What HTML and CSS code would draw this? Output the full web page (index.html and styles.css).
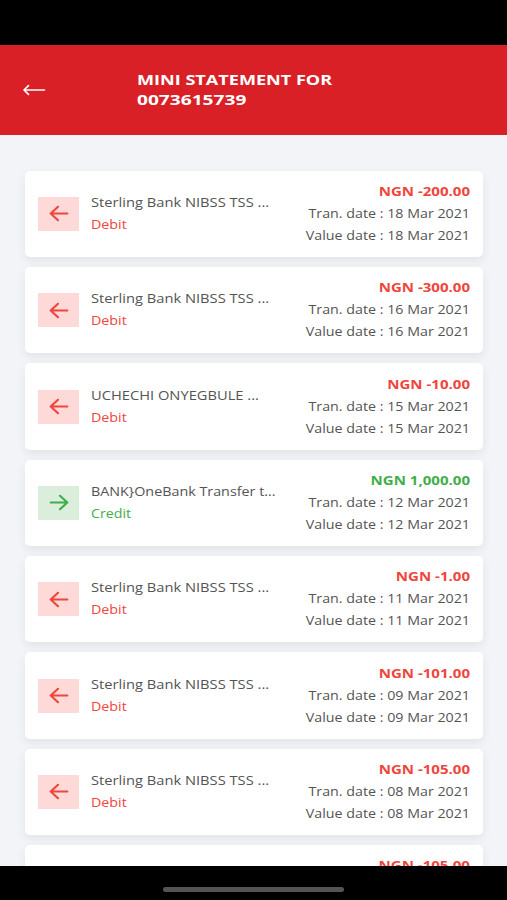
FILE: index.html
```html
<!DOCTYPE html>
<html lang="en">
<head>
    <meta charset="UTF-8">
    <meta name="viewport" content="width=device-width, initial-scale=1.0">
    <title>Mini Statement</title>
    <link rel="stylesheet" href="styles.css">
</head>
<body>

    <div class="status-bar"></div>

    <header class="header">
        <svg class="back" viewBox="0 0 24 12" width="24" height="12">
            <path d="M22.5 6H2.5M6.5 1.6L2 6L6.5 10.4"/>
        </svg>
        <h1 class="title"><span class="wide">MINI STATEMENT FOR</span><span class="wide account">0073615739</span></h1>
    </header>

    <main class="list" id="list"></main>

    <footer class="home-bar"><div class="home-indicator"></div></footer>

    <script src="script.js"></script>
</body>
</html>
```

FILE: styles.css
```css
* {
    box-sizing: border-box;
}
body {
    margin: 0;
    height: 900px;
    display: flex;
    flex-direction: column;
    overflow: hidden;
    background-color: #f3f4f8;
    font-family: "Open Sans", "Noto Sans", sans-serif;
    font-size: 12.5px;
    color: #545454;
}
.status-bar {
    flex: none;
    height: 44.5px;
    background-color: #000;
}
.header {
    flex: none;
    height: 90.5px;
    display: flex;
    align-items: center;
    padding-left: 22px;
    background-color: #da2027;
    color: #fff;
}
.back {
    fill: none;
    stroke: #fff;
    stroke-width: 1.6;
    stroke-linecap: round;
    stroke-linejoin: round;
}
.title {
    margin: 0 0 2px 90.5px;
    font-size: 15px;
    line-height: 20px;
    font-weight: 700;
}
.title .wide {
    display: block;
    transform: scaleX(1.205);
    transform-origin: left;
}
.title .account {
    transform: scaleX(1.275);
}
.list {
    flex: 1;
    min-height: 0;
    overflow: hidden;
    display: flex;
    flex-direction: column;
    gap: 9.85px;
    padding: 35.6px 24px 0 25px;
}
.card {
    flex: none;
    height: 86.5px;
    display: flex;
    align-items: center;
    padding: 0 13px;
    background-color: #fff;
    border-radius: 5px;
    box-shadow: 0 4px 10px rgba(0, 0, 0, 0.07);
    line-height: 22px;
    white-space: nowrap;
}
.icon {
    flex: none;
    width: 41px;
    height: 34px;
    display: flex;
    align-items: center;
    justify-content: center;
    background-color: #fdd9d8;
}
.icon svg {
    fill: none;
    stroke: #f0453c;
    stroke-width: 2.2;
    stroke-linecap: round;
    stroke-linejoin: round;
}
.details {
    flex: 1;
    margin-left: 12px;
    transform: scaleX(1.175);
    transform-origin: left;
}
.type {
    transform: scaleX(0.97);
    transform-origin: left;
}
.amounts {
    text-align: right;
    transform: scaleX(1.14);
    transform-origin: right;
}
.type, .amount {
    color: #f0453c;
}
.amount {
    font-weight: 700;
    transform: scaleX(1.055);
    transform-origin: right;
}
.credit .icon {
    background-color: #dbeedc;
}
.credit .icon svg {
    stroke: #3fae49;
    transform: rotate(180deg);
}
.credit .name {
    transform: scaleX(0.975);
    transform-origin: left;
}
.credit .type, .credit .amount {
    color: #3fae49;
}
.home-bar {
    flex: none;
    height: 34.5px;
    display: flex;
    justify-content: center;
    padding-top: 21.5px;
    background-color: #000;
}
.home-indicator {
    width: 181px;
    height: 5px;
    border-radius: 3px;
    background-color: #545454;
}
```

FILE: script.js
```javascript
const transactions = [
    { name: 'Sterling Bank NIBSS TSS ...', type: 'Debit', amount: '-200.00', date: '18 Mar 2021' },
    { name: 'Sterling Bank NIBSS TSS ...', type: 'Debit', amount: '-300.00', date: '16 Mar 2021' },
    { name: 'UCHECHI ONYEGBULE ...', type: 'Debit', amount: '-10.00', date: '15 Mar 2021' },
    { name: 'BANK}OneBank Transfer t...', type: 'Credit', amount: '1,000.00', date: '12 Mar 2021' },
    { name: 'Sterling Bank NIBSS TSS ...', type: 'Debit', amount: '-1.00', date: '11 Mar 2021' },
    { name: 'Sterling Bank NIBSS TSS ...', type: 'Debit', amount: '-101.00', date: '09 Mar 2021' },
    { name: 'Sterling Bank NIBSS TSS ...', type: 'Debit', amount: '-105.00', date: '08 Mar 2021' },
    { name: '', type: '', amount: '-105.00', date: '' }
];

document.getElementById('list').innerHTML = transactions.map(t => `
    <div class="card ${t.type.toLowerCase()}">
        ${t.type ? `<div class="icon">
            <svg viewBox="0 0 20 17" width="20" height="17"><path d="M18.3 8.5H1.7M9 1.8L1.7 8.5L9 15.2"/></svg>
        </div>` : ''}
        <div class="details">
            <div class="name">${t.name}</div>
            <div class="type">${t.type}</div>
        </div>
        <div class="amounts">
            <div class="amount">NGN ${t.amount}</div>
            <div class="date">${t.date ? 'Tran. date : ' + t.date : '&nbsp;'}</div>
            <div class="date">${t.date ? 'Value date : ' + t.date : '&nbsp;'}</div>
        </div>
    </div>`).join('');
```
